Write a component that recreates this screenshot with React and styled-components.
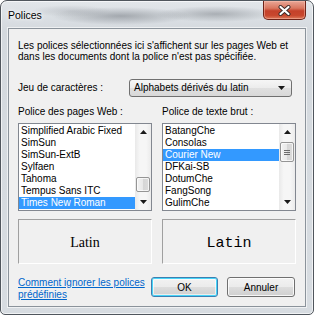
import React from "react";
import styled, { createGlobalStyle } from "styled-components";

const webFonts = [
  "Simplified Arabic Fixed",
  "SimSun",
  "SimSun-ExtB",
  "Sylfaen",
  "Tahoma",
  "Tempus Sans ITC",
  "Times New Roman",
];

const plainFonts = [
  "BatangChe",
  "Consolas",
  "Courier New",
  "DFKai-SB",
  "DotumChe",
  "FangSong",
  "GulimChe",
];

const GlobalStyle = createGlobalStyle`
  html, body {
    margin: 0;
    padding: 0;
    background: #ffffff;
  }
  body {
    font-family: "Liberation Sans", Arial, sans-serif;
    font-size: 10px;
    color: #000000;
  }
  * {
    box-sizing: border-box;
  }
`;

function ArrowGlyph({ up }) {
  return (
    <svg width="7" height="4" viewBox="0 0 7 4">
      <path d={up ? "M0 4 L3.5 0 L7 4 Z" : "M0 0 L7 0 L3.5 4 Z"} fill="#1a1a1a" />
    </svg>
  );
}

function CloseGlyph() {
  return (
    <svg width="13" height="11" viewBox="0 0 13 11">
      <path d="M2.5 2 L10.5 9 M10.5 2 L2.5 9" stroke="#3b2a28" strokeWidth="4" strokeLinecap="round" />
      <path d="M2.5 2 L10.5 9 M10.5 2 L2.5 9" stroke="#ffffff" strokeWidth="2.2" strokeLinecap="round" />
    </svg>
  );
}

function ListPanel({ label, items, selected, thumbOffset, thumbSize, grip }) {
  return (
    <Column>
      <ColumnLabel>{label}</ColumnLabel>
      <ListBox>
        <Items>
          {items.map((name) => (
            <Item key={name} selected={name === selected}>
              {name}
            </Item>
          ))}
        </Items>
        <ScrollBar>
          <ScrollArrow>
            <ArrowGlyph up />
          </ScrollArrow>
          <Track>
            <Thumb offset={thumbOffset} size={thumbSize}>
              {grip && <Grip />}
            </Thumb>
          </Track>
          <ScrollArrow>
            <ArrowGlyph />
          </ScrollArrow>
        </ScrollBar>
      </ListBox>
    </Column>
  );
}

export default function App() {
  return (
    <>
      <GlobalStyle />
      <Window>
        <TitleBar>
          <Title>Polices</Title>
          <CloseButton>
            <CloseGlyph />
          </CloseButton>
        </TitleBar>
        <Client>
          <Intro>
            Les polices sélectionnées ici s'affichent sur les pages Web et
            dans les documents dont la police n'est pas spécifiée.
          </Intro>

          <CharsetRow>
            <FieldLabel>Jeu de caractères :</FieldLabel>
            <Combo>
              <span>Alphabets dérivés du latin</span>
              <ArrowGlyph />
            </Combo>
          </CharsetRow>

          <Columns>
            <ListPanel
              label="Police des pages Web :"
              items={webFonts}
              selected="Times New Roman"
              thumbOffset={37}
              thumbSize={15}
            />
            <ListPanel
              label="Police de texte brut :"
              items={plainFonts}
              selected="Courier New"
              thumbOffset={2}
              thumbSize={20}
              grip
            />
          </Columns>

          <Previews>
            <Preview>Latin</Preview>
            <Preview mono>Latin</Preview>
          </Previews>

          <Footer>
            <HelpLink href="#">Comment ignorer les polices prédéfinies</HelpLink>
            <Buttons>
              <Button primary>OK</Button>
              <Button>Annuler</Button>
            </Buttons>
          </Footer>
        </Client>
      </Window>
    </>
  );
}

const Window = styled.div`
  width: 314px;
  height: 315px;
  display: flex;
  flex-direction: column;
  padding: 0 7px 7px 7px;
  border: 1px solid #50565d;
  border-radius: 7px 7px 5px 5px;
  box-shadow: inset 0 0 0 1px rgba(255, 255, 255, 0.65);
  background:
    radial-gradient(70px 9px at 120px 15px, rgba(95, 100, 108, 0.45), transparent),
    radial-gradient(60px 8px at 215px 13px, rgba(95, 100, 108, 0.4), transparent),
    radial-gradient(40px 6px at 70px 10px, rgba(120, 125, 132, 0.25), transparent),
    linear-gradient(#e2e6ea, #d4d9de 30px, #d7dce1);
  overflow: hidden;
`;

const TitleBar = styled.div`
  height: 27px;
  display: flex;
  justify-content: space-between;
  align-items: flex-start;
`;

const Title = styled.div`
  margin-top: 8px;
  font-size: 10.5px;
  line-height: 13px;
  color: #000000;
  text-shadow: 0 0 6px #ffffff, 0 0 3px #ffffff;
`;

const CloseButton = styled.div`
  width: 43px;
  height: 19px;
  display: flex;
  align-items: center;
  justify-content: center;
  border: 1px solid #6e2318;
  border-top: none;
  border-radius: 0 0 5px 5px;
  background: linear-gradient(#e9a797, #d9765f 40%, #c4412a 55%, #c8472d 80%, #dc7a5c);
  box-shadow: inset 0 0 0 1px rgba(255, 200, 185, 0.45);
`;

const Client = styled.div`
  flex: 1;
  display: flex;
  flex-direction: column;
  padding: 11px 9px 0 9px;
  background: #f0f0f0;
  border: 1px solid #8b939b;
  box-shadow: 0 0 0 1px rgba(255, 255, 255, 0.6);
`;

const Intro = styled.p`
  margin: 0;
  line-height: 11px;
`;

const CharsetRow = styled.div`
  margin-top: 17px;
  display: flex;
  align-items: center;
  height: 18px;
`;

const FieldLabel = styled.div`
  width: 111px;
  line-height: 12px;
`;

const Combo = styled.div`
  width: 163px;
  height: 18px;
  display: flex;
  align-items: center;
  justify-content: space-between;
  padding: 0 6px 0 4px;
  border: 1px solid #707070;
  border-radius: 3px;
  background: linear-gradient(#f6f6f6, #ececec 50%, #e0e0e0 51%, #d8d8d8);
  line-height: 12px;
`;

const Columns = styled.div`
  margin-top: 9px;
  display: flex;
  gap: 10px;
`;

const Column = styled.div`
  width: 134px;
  display: flex;
  flex-direction: column;
`;

const ColumnLabel = styled.div`
  line-height: 12px;
  margin-bottom: 5px;
`;

const ListBox = styled.div`
  height: 88px;
  display: flex;
  border: 1px solid #828790;
  background: #ffffff;
`;

const Items = styled.div`
  width: 116px;
  padding-top: 1px;
  display: flex;
  flex-direction: column;
`;

const Item = styled.div`
  height: 12px;
  line-height: 12px;
  padding-left: 2px;
  white-space: nowrap;
  background: ${(p) => (p.selected ? "#3399ff" : "transparent")};
  color: ${(p) => (p.selected ? "#ffffff" : "#000000")};
`;

const ScrollBar = styled.div`
  width: 16px;
  display: flex;
  flex-direction: column;
  background: linear-gradient(90deg, #e9e9e9, #f6f6f6 30%, #f6f6f6 70%, #ebebeb);
`;

const ScrollArrow = styled.div`
  height: 16px;
  display: flex;
  align-items: center;
  justify-content: center;
`;

const Track = styled.div`
  flex: 1;
  display: flex;
  flex-direction: column;
  align-items: center;
`;

const Thumb = styled.div`
  margin-top: ${(p) => p.offset}px;
  width: 14px;
  height: ${(p) => p.size}px;
  display: flex;
  align-items: center;
  justify-content: center;
  border: 1px solid #959595;
  border-radius: 2px;
  background: linear-gradient(90deg, #f3f3f3, #e8e8e8 50%, #d6d6d6 51%, #dcdcdc);
  box-shadow: inset 0 0 0 1px rgba(255, 255, 255, 0.7);
`;

const Grip = styled.div`
  width: 6px;
  height: 5px;
  background: repeating-linear-gradient(#6b6b6b 0 1px, transparent 1px 2px);
`;

const Previews = styled.div`
  margin-top: 8px;
  display: flex;
  gap: 10px;
`;

const Preview = styled.div`
  width: 134px;
  height: 45px;
  display: flex;
  align-items: center;
  justify-content: center;
  padding-top: 3px;
  border: 1px solid;
  border-color: #a0a0a0 #ffffff #ffffff #a0a0a0;
  font-family: ${(p) =>
    p.mono ? '"Liberation Mono", "Courier New", monospace' : '"Liberation Serif", "Times New Roman", serif'};
  font-size: ${(p) => (p.mono ? "15px" : "14px")};
`;

const Footer = styled.div`
  margin-top: 13px;
  display: flex;
  align-items: flex-start;
  justify-content: space-between;
`;

const HelpLink = styled.a`
  width: 130px;
  line-height: 12px;
  color: #0066cc;
  text-decoration: underline;
`;

const Buttons = styled.div`
  display: flex;
  gap: 9px;
  margin-right: 1px;
`;

const Button = styled.div`
  width: ${(p) => (p.primary ? "67px" : "68px")};
  height: 20px;
  display: flex;
  align-items: center;
  justify-content: center;
  border: 1px solid ${(p) => (p.primary ? "#3c7fb1" : "#707070")};
  border-radius: 3px;
  background: linear-gradient(#f2f2f2, #ebebeb 50%, #dddddd 51%, #cfcfcf);
  box-shadow: ${(p) =>
    p.primary ? "inset 0 0 0 1px #48d5f9, inset 0 0 0 2px rgba(255,255,255,0.6)" : "inset 0 0 0 1px rgba(255,255,255,0.8)"};
`;
